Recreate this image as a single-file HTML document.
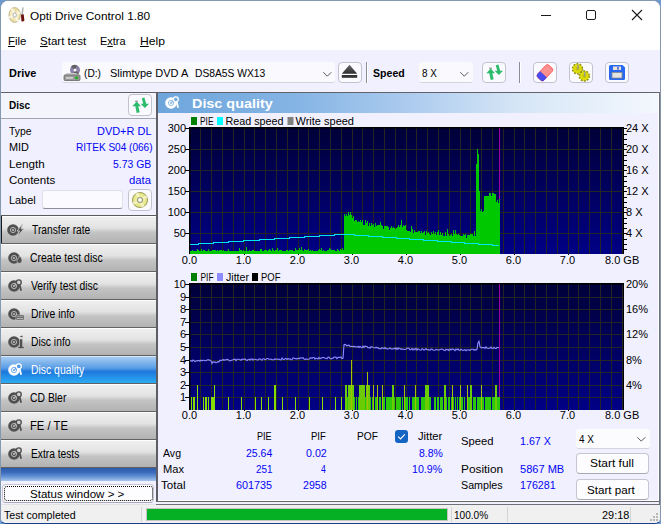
<!DOCTYPE html><html><head><meta charset="utf-8"><title>Opti Drive Control 1.80</title><style>
*{box-sizing:border-box;margin:0;padding:0}
html,body{width:661px;height:524px;overflow:hidden;background:#6a9ad0}
body{font-family:"Liberation Sans",sans-serif;font-size:12px;color:#000;position:relative}
.abs{position:absolute}
.t{position:absolute;white-space:nowrap;transform-origin:0 0}
#win{left:0;top:0;width:661px;height:524px;background:#f0f0ff;border:1px solid #8498b0;border-radius:8px 8px 6px 6px;overflow:hidden;border-bottom-color:#1c3c8c}
#title{left:0;top:0;width:661px;height:50px;background:#fff}
.combo{position:absolute;background:#f9f9fe;border-radius:3px;border-bottom:1px solid #d4d4dc}
.tbtn{position:absolute;border:1px solid #c2c2d0;border-radius:4px;background:#fafaff}
.nav{position:absolute;left:1px;width:155px;height:28px;background:linear-gradient(#efefef 0%,#e2e2e2 42%,#c4c4c4 58%,#b2b2b2 100%);border-top:1px solid #fdfdfd;border-bottom:1px solid #626262}
.nav.sel{background:linear-gradient(#a6ccf2 0%,#5a9ee6 42%,#1e78dc 56%,#2cacf4 100%);border-top-color:#d6e8fa}
.wbtn{position:absolute;border:1px solid #c6c6d2;border-bottom-color:#a8a8b4;border-radius:4px;background:#fdfdff}
</style></head><body><div id="win" class="abs">
<div class="abs" style="left:-1px;top:-1px;width:661px;height:524px">
<div id="title" class="abs"></div>
<svg class="abs" style="left:8px;top:6px" width="18" height="18" viewBox="8 6 18 18"><defs><radialGradient id="cd"><stop offset="0.300" stop-color="#fbf6dc"/><stop offset="0.800" stop-color="#efe4b0"/><stop offset="1" stop-color="#cfc28c"/></radialGradient></defs><ellipse cx="14.700" cy="15" rx="5.800" ry="7.600" fill="url(#cd)" stroke="#b4a87c" stroke-width="0.600"/><path d="M14.700,15L10.500,9.500L12.500,8ZM14.700,15L19,20.500L17,22ZM14.700,15L9,16L9.300,18.500ZM14.700,15L20.300,13.500L20,11.500Z" fill="#fffdf0" opacity="0.850"/><path d="M14.700,15L15.500,7.500L17.500,8.300ZM14.700,15L13.500,22.500L11.800,21.800Z" fill="#dccf98" opacity="0.800"/><ellipse cx="14.700" cy="15" rx="1.900" ry="2.400" fill="#d8d8d8" stroke="#a8a8a8" stroke-width="0.500"/><ellipse cx="14.700" cy="15" rx="0.900" ry="1.200" fill="#fff"/><path d="M22.600,7.500L23.400,7.700L22.600,15.500L21.300,15.500Z" fill="#b8b8b8" stroke="#8c8c8c" stroke-width="0.300"/><path d="M21,14.800L23.700,14.300L24.400,20.800Q23,22 21.400,21.300Z" fill="#6c1010"/></svg>
<div class="t" style="left:30px;top:9px;font-size:11.5px;line-height:14px;transform:scaleX(1.0276)">Opti Drive Control 1.80</div>
<div class="t" style="left:8px;top:34px;font-size:11.5px;line-height:14px;transform:scaleX(0.9854)"><u>F</u>ile</div>
<div class="t" style="left:40px;top:34px;font-size:11.5px;line-height:14px;transform:scaleX(1.0027)"><u>S</u>tart test</div>
<div class="t" style="left:100px;top:34px;font-size:11.5px;line-height:14px;transform:scaleX(0.9529)">E<u>x</u>tra</div>
<div class="t" style="left:140px;top:34px;font-size:11.5px;line-height:14px;transform:scaleX(1.0554)"><u>H</u>elp</div>
<svg class="abs" style="left:530px;top:0" width="131" height="32" viewBox="0 0 131 32"><g stroke="#1a1a1a" stroke-width="1" fill="none"><path d="M11,15.500h10" shape-rendering="crispEdges"/><rect x="56.500" y="10.500" width="9" height="9" rx="1.500"/><path d="M102,10l10,10M112,10l-10,10" stroke-width="1.100"/></g></svg>
<div class="t" style="left:9px;top:66px;font-size:11.5px;line-height:14px;transform:scaleX(0.9490);font-weight:bold">Drive</div>
<div class="combo" style="left:62px;top:62px;width:273px;height:21px"></div>
<svg class="abs" style="left:63px;top:63px" width="18" height="19" viewBox="0 0 18 19"><circle cx="12" cy="7" r="5" fill="#8c80a8"/><path d="M12,7L8,3.500A5,5 0 0 1 14,2.400Z" fill="#606060"/><path d="M12,7L16,10.500A5,5 0 0 1 10,11.600Z" fill="#606060"/><circle cx="12" cy="7" r="1.500" fill="#fff"/><path d="M1,12.500L4,10h9l4,2.500z" fill="#c8c8c8"/><rect x="1" y="12" width="16" height="5.500" rx="1" fill="#9a9a9a" stroke="#666" stroke-width="0.800"/><rect x="3" y="14.300" width="7" height="1.200" fill="#e8e8e8"/><circle cx="13.500" cy="14.700" r="1.500" fill="#18b018"/></svg>
<div class="t" style="left:84px;top:66px;font-size:11.5px;line-height:14px;transform:scaleX(0.8839)">(D:)</div>
<div class="t" style="left:110px;top:66px;font-size:11.5px;line-height:14px;transform:scaleX(0.9580)">Slimtype DVD A</div>
<div class="t" style="left:195px;top:66px;font-size:11.5px;line-height:14px;transform:scaleX(0.8934)">DS8A5S WX13</div>
<svg class="abs" style="left:322px;top:71px" width="11" height="7" viewBox="0 0 11 7"><path d="M1.300,1.200l4,4l4,-4" stroke="#484848" fill="none" stroke-width="0.900"/></svg>
<div class="tbtn" style="left:338px;top:62px;width:24px;height:21px"></div>
<svg class="abs" style="left:341px;top:64px" width="18" height="15" viewBox="0 0 18 15"><defs><linearGradient id="eg" x1="0" y1="0" x2="0" y2="1"><stop offset="0" stop-color="#6a6a6a"/><stop offset="1" stop-color="#2c2c2c"/></linearGradient></defs><path d="M8.500,0.800L16.200,9.700H0.800Z" fill="url(#eg)"/><rect x="0.800" y="11" width="15.400" height="2.800" fill="#333"/></svg>
<div class="abs" style="left:366px;top:62px;width:1px;height:21px;background:#8c8c94"></div><div class="abs" style="left:367px;top:62px;width:1px;height:21px;background:#fff"></div>
<div class="t" style="left:373px;top:66px;font-size:11.5px;line-height:14px;transform:scaleX(0.9193);font-weight:bold">Speed</div>
<div class="combo" style="left:419px;top:62px;width:54px;height:21px"></div>
<div class="t" style="left:422px;top:66px;font-size:11.5px;line-height:14px;transform:scaleX(0.8585)">8 X</div>
<svg class="abs" style="left:459px;top:71px" width="11" height="7" viewBox="0 0 11 7"><path d="M1.300,1.200l4,4l4,-4" stroke="#484848" fill="none" stroke-width="0.900"/></svg>
<div class="tbtn" style="left:482px;top:62px;width:24px;height:21px"></div>
<svg class="abs" style="left:484.5px;top:64px" width="20" height="18" viewBox="0 0 20 18"><path d="M1.300,9.300L5.700,4.500L10,9.300H7.300L8.700,15.200L5.700,16L4.300,9.300Z" fill="#2cbc6c"/><path d="M9.600,6.700H12.200L10.800,1.200L13.400,0.500L15.200,6.700H18L13.900,11Z" fill="#2cbc6c"/><path d="M4,4.200h3" stroke="#555" stroke-width="0.700"/></svg>
<div class="abs" style="left:519px;top:62px;width:1px;height:21px;background:#8c8c94"></div><div class="abs" style="left:520px;top:62px;width:1px;height:21px;background:#fff"></div>
<div class="tbtn" style="left:533px;top:62px;width:24px;height:21px"></div>
<svg class="abs" style="left:535px;top:63px" width="20" height="19" viewBox="0 0 20 19"><g transform="rotate(-47 10 9.500)"><rect x="1.500" y="5.200" width="16.500" height="8.800" rx="2.500" fill="#ff9090" stroke="#ff5c5c" stroke-width="0.900"/><path d="M4,5.200H7.300V14H4A2.500,2.500 0 0 1 1.500,11.500V7.700A2.500,2.500 0 0 1 4,5.200Z" fill="#4a4af4" stroke="#3838d8" stroke-width="0.500"/></g></svg>
<div class="tbtn" style="left:569px;top:62px;width:24px;height:21px"></div>
<svg class="abs" style="left:570px;top:62px" width="24" height="22" viewBox="0 0 24 22"><circle cx="7.5" cy="6.8" r="4.900" fill="#d4d410" stroke="#909010" stroke-width="1.800" stroke-dasharray="1.700 1.380"/><circle cx="7.5" cy="6.8" r="4.300" fill="#dcdc0c"/><circle cx="7.5" cy="6.8" r="2" fill="#c4c408"/><rect x="7.3" y="2.8" width="1.400" height="4.500" fill="#989898"/><circle cx="14.3" cy="14" r="4.900" fill="#d4d410" stroke="#909010" stroke-width="1.800" stroke-dasharray="1.700 1.380"/><circle cx="14.3" cy="14" r="4.300" fill="#dcdc0c"/><circle cx="14.3" cy="14" r="2" fill="#c4c408"/><rect x="14.1" y="10" width="1.400" height="4.500" fill="#989898"/></svg>
<div class="tbtn" style="left:605px;top:62px;width:24px;height:21px"></div>
<svg class="abs" style="left:608px;top:64px" width="18" height="17" viewBox="0 0 18 17"><path d="M1,2.500Q1,1 2.500,1H14.500L17,3.500V14.500Q17,16 15.500,16H2.500Q1,16 1,14.500Z" fill="#2868f0"/><rect x="5" y="2.500" width="8" height="3.500" fill="#ece4d4"/><rect x="9.300" y="2.800" width="1.400" height="2.900" fill="#3050e0"/><rect x="4" y="8.500" width="10" height="5.500" fill="#e4e4e4" stroke="#8a8a8a" stroke-width="0.800"/></svg>
<div class="abs" style="left:0;top:92px;width:158px;height:1px;background:#62626a"></div>
<div class="abs" style="left:156px;top:92px;width:2px;height:410px;background:#5e5e66"></div>
<div class="abs" style="left:1px;top:93px;width:155px;height:26px;background:#f4f4fc;border-bottom:1px solid #a4a4ac"></div>
<div class="t" style="left:9px;top:98px;font-size:11.5px;line-height:14px;transform:scaleX(0.8685);font-weight:bold">Disc</div>
<div class="tbtn" style="left:128px;top:94px;width:24px;height:22px"></div>
<svg class="abs" style="left:130.5px;top:96.5px" width="20" height="18" viewBox="0 0 20 18"><path d="M1.300,9.300L5.700,4.500L10,9.300H7.300L8.700,15.200L5.700,16L4.300,9.300Z" fill="#2cbc6c"/><path d="M9.600,6.700H12.200L10.800,1.200L13.400,0.500L15.200,6.700H18L13.900,11Z" fill="#2cbc6c"/><path d="M4,4.200h3" stroke="#555" stroke-width="0.700"/></svg>
<div class="t" style="left:9px;top:124px;font-size:11.5px;line-height:14px;transform:scaleX(0.9007)">Type</div>
<div class="t" style="left:97px;top:124px;font-size:11.5px;line-height:14px;transform:scaleX(0.9523);color:#0404f4">DVD+R DL</div>
<div class="t" style="left:9px;top:140px;font-size:11.5px;line-height:14px;transform:scaleX(0.9452)">MID</div>
<div class="t" style="left:76px;top:140px;font-size:11.5px;line-height:14px;transform:scaleX(0.8743);color:#0404f4">RITEK S04 (066)</div>
<div class="t" style="left:9px;top:157px;font-size:11.5px;line-height:14px;transform:scaleX(1.0143)">Length</div>
<div class="t" style="left:113px;top:157px;font-size:11.5px;line-height:14px;transform:scaleX(0.9046);color:#0404f4">5.73 GB</div>
<div class="t" style="left:9px;top:173px;font-size:11.5px;line-height:14px;transform:scaleX(1.0028)">Contents</div>
<div class="t" style="left:129px;top:173px;font-size:11.5px;line-height:14px;transform:scaleX(0.9805);color:#0404f4">data</div>
<div class="t" style="left:9px;top:193px;font-size:11.5px;line-height:14px;transform:scaleX(0.9469)">Label</div>
<div class="abs" style="left:42px;top:190px;width:81px;height:19px;background:#fbfbff;border:1px solid #e0e0ea;border-bottom-color:#8e8e98;border-radius:3px"></div>
<div class="tbtn" style="left:128px;top:189px;width:24px;height:22px"></div>
<svg class="abs" style="left:131px;top:191px" width="18" height="18" viewBox="0 0 18 18"><defs><radialGradient id="yd"><stop offset="0.350" stop-color="#f4f4b0"/><stop offset="0.850" stop-color="#e4e484"/><stop offset="1" stop-color="#b8b850"/></radialGradient></defs><circle cx="9" cy="9" r="7.600" fill="url(#yd)" stroke="#8a8a48" stroke-width="0.700"/><path d="M9,9L4,2.500L7.500,1.600ZM9,9L14,15.500L10.500,16.400ZM9,9L1.600,11L2.500,14ZM9,9L16.400,7L15.500,4Z" fill="#fafad8" opacity="0.700"/><circle cx="9" cy="9" r="2.800" fill="#d8d8c0" stroke="#8c8c70" stroke-width="0.800"/><circle cx="9" cy="9" r="1.400" fill="#fff"/></svg>
<div class="abs" style="left:1px;top:215px;width:156px;height:1px;background:#5a5a5a"></div>
<div class="abs" style="left:1px;top:216px;width:1px;height:27px;background:#1a1a1a;z-index:2"></div>
<div class="nav" style="top:216px"></div>
<svg class="abs" style="left:3.7px;top:221px" width="22" height="18" viewBox="0 0 22 18"><circle cx="9" cy="9" r="5.800" fill="#505050"/><circle cx="9" cy="9" r="2.600" fill="none" stroke="#cfcfcf" stroke-width="0.800"/><circle cx="9" cy="9" r="0.900" fill="#cfcfcf"/><path d="M18.600,2.800L13,10h2.500L12.800,16.200L19.800,7.800h-2.700z" fill="#505050" stroke="#cfcfcf" stroke-width="0.800"/></svg>
<div class="t" style="left:32px;top:223px;font-size:12px;line-height:14px;transform:scaleX(0.8543)">Transfer rate</div>
<div class="nav" style="top:244px"></div>
<svg class="abs" style="left:4.6px;top:249px" width="22" height="18" viewBox="0 0 22 18"><circle cx="9" cy="9" r="5.800" fill="#505050"/><circle cx="9" cy="9" r="2.600" fill="none" stroke="#cfcfcf" stroke-width="0.800"/><circle cx="9" cy="9" r="0.900" fill="#cfcfcf"/><path d="M14.500,6.500c2,2.300 3,4.300 2.300,6.200c-.9,2-4.300,2-4.800,0c-.5-2 2.200-3.200 2.500-6.200z" fill="#505050" stroke="#cfcfcf" stroke-width="0.700"/></svg>
<div class="t" style="left:30px;top:251px;font-size:12px;line-height:14px;transform:scaleX(0.8720)">Create test disc</div>
<div class="nav" style="top:272px"></div>
<svg class="abs" style="left:4.6px;top:277px" width="22" height="18" viewBox="0 0 22 18"><circle cx="9" cy="9" r="5.800" fill="#505050"/><path d="M9,9L12,3L15.500,7Z" fill="#cfcfcf" opacity="0.800"/><circle cx="9" cy="9" r="2.600" fill="none" stroke="#cfcfcf" stroke-width="0.800"/><circle cx="9" cy="9" r="0.900" fill="#cfcfcf"/><circle cx="13.800" cy="5.300" r="2.500" fill="#cfcfcf" stroke="#505050" stroke-width="1.300"/><path d="M14.600,7.800l1.500,6" stroke="#505050" stroke-width="1.800"/></svg>
<div class="t" style="left:31px;top:279px;font-size:12px;line-height:14px;transform:scaleX(0.8642)">Verify test disc</div>
<div class="nav" style="top:300px"></div>
<svg class="abs" style="left:4.6px;top:305px" width="22" height="18" viewBox="0 0 22 18"><circle cx="9" cy="9" r="5.800" fill="#505050"/><circle cx="9" cy="9" r="2.600" fill="none" stroke="#cfcfcf" stroke-width="0.800"/><circle cx="9" cy="9" r="0.900" fill="#cfcfcf"/><rect x="11" y="10" width="8" height="5" fill="#505050" stroke="#cfcfcf" stroke-width="0.600"/><path d="M12,11.800h6M12,13.500h6" stroke="#cfcfcf" stroke-width="0.800"/></svg>
<div class="t" style="left:31px;top:307px;font-size:12px;line-height:14px;transform:scaleX(0.8659)">Drive info</div>
<div class="nav" style="top:328px"></div>
<svg class="abs" style="left:4.6px;top:333px" width="22" height="18" viewBox="0 0 22 18"><circle cx="9" cy="9" r="5.800" fill="#505050"/><circle cx="9" cy="9" r="2.600" fill="none" stroke="#cfcfcf" stroke-width="0.800"/><circle cx="9" cy="9" r="0.900" fill="#cfcfcf"/><path d="M14.500,3.500l3,-1v2z" fill="#505050"/><rect x="14.300" y="6" width="3.400" height="9" fill="#505050" stroke="#cfcfcf" stroke-width="0.600"/><rect x="13.300" y="13.800" width="5.400" height="1.400" fill="#505050"/></svg>
<div class="t" style="left:31px;top:335px;font-size:12px;line-height:14px;transform:scaleX(0.8575)">Disc info</div>
<div class="nav sel" style="top:356px"></div>
<svg class="abs" style="left:4.6px;top:361px" width="22" height="18" viewBox="0 0 22 18"><circle cx="9" cy="9" r="5.800" fill="#fff"/><path d="M9,9L12,3L15.500,7Z" fill="#4c94e4" opacity="0.800"/><circle cx="9" cy="9" r="2.600" fill="none" stroke="#4c94e4" stroke-width="0.800"/><circle cx="9" cy="9" r="0.900" fill="#4c94e4"/><circle cx="13.800" cy="5.300" r="2.500" fill="#4c94e4" stroke="#fff" stroke-width="1.300"/><path d="M14.600,7.800l1.500,6" stroke="#fff" stroke-width="1.800"/></svg>
<div class="t" style="left:31px;top:363px;font-size:12px;line-height:14px;transform:scaleX(0.8664);color:#fff">Disc quality</div>
<div class="nav" style="top:384px"></div>
<svg class="abs" style="left:4.6px;top:389px" width="22" height="18" viewBox="0 0 22 18"><circle cx="9" cy="9" r="5.800" fill="#505050"/><path d="M9,9L12,3L15.500,7Z" fill="#cfcfcf" opacity="0.800"/><circle cx="9" cy="9" r="2.600" fill="none" stroke="#cfcfcf" stroke-width="0.800"/><circle cx="9" cy="9" r="0.900" fill="#cfcfcf"/><circle cx="13.800" cy="5.300" r="2.500" fill="#cfcfcf" stroke="#505050" stroke-width="1.300"/><path d="M14.600,7.800l1.500,6" stroke="#505050" stroke-width="1.800"/></svg>
<div class="t" style="left:30px;top:391px;font-size:12px;line-height:14px;transform:scaleX(0.8652)">CD Bler</div>
<div class="nav" style="top:412px"></div>
<svg class="abs" style="left:4.6px;top:417px" width="22" height="18" viewBox="0 0 22 18"><circle cx="9" cy="9" r="5.800" fill="#505050"/><path d="M9,9L12,3L15.500,7Z" fill="#cfcfcf" opacity="0.800"/><circle cx="9" cy="9" r="2.600" fill="none" stroke="#cfcfcf" stroke-width="0.800"/><circle cx="9" cy="9" r="0.900" fill="#cfcfcf"/><circle cx="13.800" cy="5.300" r="2.500" fill="#cfcfcf" stroke="#505050" stroke-width="1.300"/><path d="M14.600,7.800l1.500,6" stroke="#505050" stroke-width="1.800"/></svg>
<div class="t" style="left:30px;top:419px;font-size:12px;line-height:14px;transform:scaleX(0.9367)">FE / TE</div>
<div class="nav" style="top:440px"></div>
<svg class="abs" style="left:4.6px;top:445px" width="22" height="18" viewBox="0 0 22 18"><circle cx="9" cy="9" r="5.800" fill="#505050"/><path d="M9,9L12,3L15.500,7Z" fill="#cfcfcf" opacity="0.800"/><circle cx="9" cy="9" r="2.600" fill="none" stroke="#cfcfcf" stroke-width="0.800"/><circle cx="9" cy="9" r="0.900" fill="#cfcfcf"/><circle cx="13.800" cy="5.300" r="2.500" fill="#cfcfcf" stroke="#505050" stroke-width="1.300"/><path d="M14.600,7.800l1.500,6" stroke="#505050" stroke-width="1.800"/></svg>
<div class="t" style="left:31px;top:447px;font-size:12px;line-height:14px;transform:scaleX(0.8519)">Extra tests</div>
<div class="abs" style="left:1px;top:468px;width:155px;height:13px;background:linear-gradient(#2c5aa8,#3c6cbc 35%,#6a98d8 70%,#a8c6ec)"></div>
<div class="wbtn" style="left:2px;top:484px;width:152px;height:19px"></div>
<div class="abs" style="left:4px;top:486px;width:149px;height:15px;border:1px dotted #000;border-radius:3px"></div>
<div class="t" style="left:30px;top:487px;font-size:11.5px;line-height:14px;transform:scaleX(1.0038)">Status window &gt; &gt;</div>
<div class="abs" style="left:158px;top:92px;width:501px;height:1px;background:#62626a"></div>
<div class="abs" style="left:158px;top:93px;width:501px;height:20px;background:linear-gradient(90deg,#6ea6dc 0%,#84b4e4 27%,#accbee 50%,#d6e6f6 72%,#f4f8fe 100%)"></div>
<div class="abs" style="left:158px;top:500px;width:501px;height:1px;background:#fff"></div>
<div class="abs" style="left:156px;top:501px;width:504px;height:1px;background:#66666c"></div>
<div class="abs" style="left:658px;top:93px;width:1px;height:408px;background:#fff"></div>
<div class="abs" style="left:659px;top:92px;width:1px;height:413px;background:#707078"></div>
<svg class="abs" style="left:162.2px;top:94px" width="22" height="18" viewBox="0 0 22 18"><circle cx="9" cy="9" r="5.800" fill="#fff"/><path d="M9,9L12,3L15.500,7Z" fill="#78acdc" opacity="0.800"/><circle cx="9" cy="9" r="2.600" fill="none" stroke="#78acdc" stroke-width="0.800"/><circle cx="9" cy="9" r="0.900" fill="#78acdc"/><circle cx="13.800" cy="5.300" r="2.500" fill="#78acdc" stroke="#fff" stroke-width="1.300"/><path d="M14.600,7.800l1.500,6" stroke="#fff" stroke-width="1.800"/></svg>
<div class="t" style="left:192px;top:96px;font-size:13.5px;line-height:16px;transform:scaleX(1.0646);font-weight:bold;color:#fff">Disc quality</div>
<svg class="abs" width="661" height="524" viewBox="0 0 661 524" style="left:0;top:0">
<defs><linearGradient id="pg" x1="0" y1="0" x2="0" y2="1"><stop offset="0" stop-color="#000038"/><stop offset="1" stop-color="#000086"/></linearGradient><clipPath id="c1"><rect x="190" y="128" width="433" height="126"/></clipPath><clipPath id="c2"><rect x="190" y="284" width="433" height="126"/></clipPath></defs>
<rect x="189" y="127" width="434" height="127" fill="url(#pg)"/>
<path d="M200.5,128 V254 M211.5,128 V254 M222.5,128 V254 M233.5,128 V254 M244.5,128 V254 M254.5,128 V254 M265.5,128 V254 M276.5,128 V254 M287.5,128 V254 M298.5,128 V254 M308.5,128 V254 M319.5,128 V254 M330.5,128 V254 M341.5,128 V254 M352.5,128 V254 M362.5,128 V254 M373.5,128 V254 M384.5,128 V254 M395.5,128 V254 M406.5,128 V254 M416.5,128 V254 M427.5,128 V254 M438.5,128 V254 M449.5,128 V254 M460.5,128 V254 M470.5,128 V254 M481.5,128 V254 M492.5,128 V254 M503.5,128 V254 M514.5,128 V254 M524.5,128 V254 M535.5,128 V254 M546.5,128 V254 M557.5,128 V254 M568.5,128 V254 M578.5,128 V254 M589.5,128 V254 M600.5,128 V254 M611.5,128 V254 M622.5,128 V254 M190,149.5 H623 M190,170.5 H623 M190,191.5 H623 M190,212.5 H623 M190,233.5 H623" stroke="#242424" stroke-width="1" fill="none" shape-rendering="crispEdges"/>
<path d="M189,127.5H624 M189.5,127V254" stroke="#000" stroke-width="1" fill="none" shape-rendering="crispEdges"/>
<path d="M190,128.5H623 M190.5,128V254" stroke="#000" stroke-opacity="0.55" stroke-width="1" fill="none" shape-rendering="crispEdges"/>
<rect x="189" y="283" width="434" height="127" fill="url(#pg)"/>
<path d="M200.5,284 V410 M211.5,284 V410 M222.5,284 V410 M233.5,284 V410 M244.5,284 V410 M254.5,284 V410 M265.5,284 V410 M276.5,284 V410 M287.5,284 V410 M298.5,284 V410 M308.5,284 V410 M319.5,284 V410 M330.5,284 V410 M341.5,284 V410 M352.5,284 V410 M362.5,284 V410 M373.5,284 V410 M384.5,284 V410 M395.5,284 V410 M406.5,284 V410 M416.5,284 V410 M427.5,284 V410 M438.5,284 V410 M449.5,284 V410 M460.5,284 V410 M470.5,284 V410 M481.5,284 V410 M492.5,284 V410 M503.5,284 V410 M514.5,284 V410 M524.5,284 V410 M535.5,284 V410 M546.5,284 V410 M557.5,284 V410 M568.5,284 V410 M578.5,284 V410 M589.5,284 V410 M600.5,284 V410 M611.5,284 V410 M622.5,284 V410 M190,297.5 H623 M190,309.5 H623 M190,322.5 H623 M190,334.5 H623 M190,347.5 H623 M190,360.5 H623 M190,372.5 H623 M190,385.5 H623 M190,397.5 H623" stroke="#242424" stroke-width="1" fill="none" shape-rendering="crispEdges"/>
<path d="M189,283.5H624 M189.5,283V410" stroke="#000" stroke-width="1" fill="none" shape-rendering="crispEdges"/>
<path d="M190,284.5H623 M190.5,284V410" stroke="#000" stroke-opacity="0.55" stroke-width="1" fill="none" shape-rendering="crispEdges"/>
<path d="M499.5,128 V254 M499.5,284 V410" stroke="#a000a0" stroke-width="1" shape-rendering="crispEdges"/>
<g clip-path="url(#c1)"><path d="M190.0,254.0 L190.0,249.3 L190.5,250.6 L191.0,249.5 L191.5,251.3 L192.0,251.3 L192.5,249.9 L193.0,247.7 L193.5,250.5 L194.0,251.2 L194.5,250.9 L195.0,249.7 L195.5,251.0 L196.0,251.0 L196.5,251.1 L197.0,250.0 L197.5,248.8 L198.0,247.9 L198.5,250.2 L199.0,251.0 L199.5,250.5 L200.0,249.9 L200.5,251.4 L201.0,249.8 L201.5,248.5 L202.0,251.0 L202.5,251.3 L203.0,248.9 L203.5,250.0 L204.0,251.0 L204.5,250.0 L205.0,251.2 L205.5,250.7 L206.0,251.5 L206.5,250.5 L207.0,250.6 L207.5,251.4 L208.0,250.0 L208.5,249.2 L209.0,251.0 L209.5,251.0 L210.0,248.7 L210.5,251.2 L211.0,248.7 L211.5,250.7 L212.0,251.3 L212.5,250.0 L213.0,246.6 L213.5,249.8 L214.0,251.0 L214.5,250.2 L215.0,250.9 L215.5,249.8 L216.0,250.1 L216.5,250.5 L217.0,251.0 L217.5,249.9 L218.0,249.8 L218.5,251.1 L219.0,251.1 L219.5,250.1 L220.0,248.5 L220.5,250.2 L221.0,251.2 L221.5,250.1 L222.0,250.8 L222.5,250.8 L223.0,248.0 L223.5,250.4 L224.0,248.8 L224.5,250.6 L225.0,250.0 L225.5,251.1 L226.0,250.5 L226.5,251.3 L227.0,250.7 L227.5,250.8 L228.0,248.4 L228.5,249.2 L229.0,250.7 L229.5,250.9 L230.0,248.8 L230.5,251.0 L231.0,250.5 L231.5,250.7 L232.0,250.6 L232.5,250.6 L233.0,250.3 L233.5,251.0 L234.0,249.8 L234.5,251.4 L235.0,250.4 L235.5,251.2 L236.0,251.2 L236.5,251.1 L237.0,250.7 L237.5,251.2 L238.0,250.1 L238.5,251.4 L239.0,251.4 L239.5,248.1 L240.0,245.3 L240.5,250.0 L241.0,250.1 L241.5,249.9 L242.0,249.6 L242.5,251.4 L243.0,248.0 L243.5,250.0 L244.0,250.6 L244.5,251.3 L245.0,251.2 L245.5,251.0 L246.0,251.0 L246.5,246.6 L247.0,249.4 L247.5,251.3 L248.0,250.6 L248.5,250.6 L249.0,250.9 L249.5,250.4 L250.0,251.2 L250.5,250.8 L251.0,250.0 L251.5,251.1 L252.0,251.2 L252.5,249.9 L253.0,251.1 L253.5,249.9 L254.0,248.0 L254.5,251.3 L255.0,251.4 L255.5,250.5 L256.0,250.4 L256.5,250.8 L257.0,251.2 L257.5,251.4 L258.0,250.4 L258.5,251.2 L259.0,250.1 L259.5,250.5 L260.0,249.6 L260.5,248.8 L261.0,250.4 L261.5,248.6 L262.0,250.6 L262.5,251.4 L263.0,251.4 L263.5,251.1 L264.0,250.7 L264.5,250.3 L265.0,250.0 L265.5,250.2 L266.0,250.8 L266.5,250.3 L267.0,250.6 L267.5,251.3 L268.0,247.5 L268.5,250.1 L269.0,248.6 L269.5,249.2 L270.0,251.3 L270.5,250.0 L271.0,250.0 L271.5,250.7 L272.0,251.2 L272.5,248.2 L273.0,251.3 L273.5,250.0 L274.0,250.8 L274.5,250.9 L275.0,249.3 L275.5,249.9 L276.0,249.7 L276.5,250.0 L277.0,249.9 L277.5,248.4 L278.0,250.2 L278.5,251.4 L279.0,250.7 L279.5,250.2 L280.0,250.4 L280.5,250.4 L281.0,250.0 L281.5,250.0 L282.0,251.0 L282.5,251.3 L283.0,250.5 L283.5,250.8 L284.0,250.8 L284.5,251.0 L285.0,250.6 L285.5,251.1 L286.0,250.8 L286.5,249.9 L287.0,250.3 L287.5,249.5 L288.0,250.1 L288.5,250.7 L289.0,250.3 L289.5,250.4 L290.0,248.6 L290.5,249.9 L291.0,251.3 L291.5,250.1 L292.0,250.5 L292.5,249.7 L293.0,249.9 L293.5,250.7 L294.0,249.9 L294.5,251.4 L295.0,250.8 L295.5,248.2 L296.0,250.8 L296.5,250.1 L297.0,251.1 L297.5,250.1 L298.0,250.2 L298.5,250.1 L299.0,250.4 L299.5,248.4 L300.0,250.4 L300.5,250.0 L301.0,249.9 L301.5,246.6 L302.0,250.8 L302.5,250.5 L303.0,247.4 L303.5,250.9 L304.0,249.6 L304.5,249.0 L305.0,251.4 L305.5,250.1 L306.0,249.9 L306.5,250.0 L307.0,249.9 L307.5,250.3 L308.0,251.5 L308.5,249.2 L309.0,250.7 L309.5,250.8 L310.0,250.7 L310.5,250.1 L311.0,250.2 L311.5,250.9 L312.0,249.4 L312.5,250.0 L313.0,249.8 L313.5,250.8 L314.0,250.3 L314.5,250.8 L315.0,250.2 L315.5,251.3 L316.0,250.5 L316.5,251.1 L317.0,251.2 L317.5,250.9 L318.0,250.6 L318.5,250.4 L319.0,250.7 L319.5,249.2 L320.0,251.2 L320.5,249.9 L321.0,250.7 L321.5,248.4 L322.0,251.1 L322.5,251.1 L323.0,250.4 L323.5,249.6 L324.0,250.1 L324.5,251.3 L325.0,250.0 L325.5,250.8 L326.0,249.9 L326.5,250.9 L327.0,249.8 L327.5,250.2 L328.0,250.8 L328.5,250.0 L329.0,251.5 L329.5,248.4 L330.0,249.9 L330.5,248.7 L331.0,249.5 L331.5,249.8 L332.0,249.9 L332.5,250.4 L333.0,250.2 L333.5,250.1 L334.0,251.1 L334.5,250.2 L335.0,248.6 L335.5,251.4 L336.0,250.5 L336.5,251.0 L337.0,250.8 L337.5,249.2 L338.0,251.1 L338.5,249.5 L339.0,251.3 L339.5,250.7 L340.0,248.6 L340.5,249.4 L341.0,247.7 L341.5,250.3 L342.0,249.8 L342.5,248.0 L343.0,251.4 L343.5,251.2 L344.0,212.4 L344.5,214.0 L345.0,216.9 L345.5,215.7 L346.0,216.9 L346.5,214.2 L347.0,216.2 L347.5,216.0 L348.0,213.3 L348.5,211.9 L349.0,213.0 L349.5,215.2 L350.0,212.9 L350.5,212.4 L351.0,212.0 L351.5,215.5 L352.0,212.7 L352.5,218.4 L353.0,218.1 L353.5,215.5 L354.0,217.6 L354.5,220.6 L355.0,218.8 L355.5,219.7 L356.0,221.8 L356.5,219.6 L357.0,219.8 L357.5,222.1 L358.0,220.6 L358.5,220.6 L359.0,223.0 L359.5,222.2 L360.0,221.0 L360.5,220.4 L361.0,220.3 L361.5,221.7 L362.0,221.5 L362.5,220.3 L363.0,223.6 L363.5,224.7 L364.0,223.1 L364.5,224.9 L365.0,225.2 L365.5,220.2 L366.0,222.7 L366.5,222.7 L367.0,224.9 L367.5,220.8 L368.0,222.4 L368.5,226.1 L369.0,222.8 L369.5,222.9 L370.0,224.5 L370.5,226.4 L371.0,223.3 L371.5,222.9 L372.0,225.7 L372.5,225.1 L373.0,224.8 L373.5,224.3 L374.0,226.4 L374.5,227.4 L375.0,226.5 L375.5,223.4 L376.0,226.3 L376.5,226.4 L377.0,223.9 L377.5,225.0 L378.0,223.7 L378.5,224.5 L379.0,224.5 L379.5,225.2 L380.0,227.2 L380.5,222.1 L381.0,227.7 L381.5,224.7 L382.0,228.2 L382.5,226.0 L383.0,226.0 L383.5,229.0 L384.0,227.8 L384.5,225.7 L385.0,229.3 L385.5,225.5 L386.0,229.3 L386.5,225.8 L387.0,226.2 L387.5,226.2 L388.0,228.3 L388.5,226.6 L389.0,228.7 L389.5,230.1 L390.0,228.9 L390.5,228.5 L391.0,225.8 L391.5,226.2 L392.0,230.0 L392.5,228.0 L393.0,228.3 L393.5,227.3 L394.0,222.2 L394.5,227.9 L395.0,225.8 L395.5,229.1 L396.0,226.7 L396.5,227.9 L397.0,226.9 L397.5,227.2 L398.0,226.9 L398.5,224.8 L399.0,227.5 L399.5,227.5 L400.0,224.7 L400.5,225.0 L401.0,226.2 L401.5,220.3 L402.0,228.2 L402.5,227.3 L403.0,226.5 L403.5,225.0 L404.0,227.3 L404.5,226.3 L405.0,227.1 L405.5,225.4 L406.0,227.7 L406.5,230.3 L407.0,227.9 L407.5,231.1 L408.0,227.9 L408.5,231.4 L409.0,229.2 L409.5,230.9 L410.0,231.4 L410.5,232.3 L411.0,232.3 L411.5,225.9 L412.0,233.0 L412.5,229.0 L413.0,230.2 L413.5,232.8 L414.0,233.3 L414.5,230.4 L415.0,230.3 L415.5,231.7 L416.0,229.4 L416.5,232.2 L417.0,230.0 L417.5,231.6 L418.0,232.3 L418.5,231.0 L419.0,230.8 L419.5,230.5 L420.0,231.5 L420.5,233.1 L421.0,234.1 L421.5,231.0 L422.0,231.8 L422.5,232.8 L423.0,231.9 L423.5,231.7 L424.0,234.0 L424.5,231.3 L425.0,232.7 L425.5,234.9 L426.0,234.3 L426.5,230.8 L427.0,234.7 L427.5,232.7 L428.0,232.9 L428.5,231.5 L429.0,233.5 L429.5,234.4 L430.0,233.6 L430.5,234.9 L431.0,232.7 L431.5,232.0 L432.0,233.7 L432.5,234.0 L433.0,234.6 L433.5,231.4 L434.0,234.8 L434.5,234.0 L435.0,235.3 L435.5,232.1 L436.0,233.8 L436.5,234.9 L437.0,234.4 L437.5,232.3 L438.0,233.9 L438.5,230.1 L439.0,234.5 L439.5,235.0 L440.0,235.1 L440.5,232.4 L441.0,235.0 L441.5,234.9 L442.0,234.4 L442.5,233.4 L443.0,232.2 L443.5,236.2 L444.0,232.3 L444.5,235.9 L445.0,233.6 L445.5,232.2 L446.0,234.9 L446.5,235.6 L447.0,231.3 L447.5,229.3 L448.0,234.0 L448.5,233.7 L449.0,233.2 L449.5,236.0 L450.0,234.4 L450.5,234.9 L451.0,234.4 L451.5,233.8 L452.0,236.8 L452.5,236.4 L453.0,234.8 L453.5,229.6 L454.0,235.0 L454.5,234.1 L455.0,235.5 L455.5,230.1 L456.0,231.8 L456.5,234.1 L457.0,235.8 L457.5,235.0 L458.0,230.2 L458.5,234.5 L459.0,233.4 L459.5,235.2 L460.0,233.9 L460.5,235.5 L461.0,235.0 L461.5,236.2 L462.0,235.7 L462.5,236.3 L463.0,233.1 L463.5,234.0 L464.0,236.2 L464.5,235.0 L465.0,231.1 L465.5,233.6 L466.0,237.5 L466.5,237.8 L467.0,233.6 L467.5,234.8 L468.0,233.7 L468.5,235.0 L469.0,234.7 L469.5,234.8 L470.0,234.9 L470.5,233.7 L471.0,237.8 L471.5,233.8 L472.0,236.3 L472.5,234.4 L473.0,236.9 L473.5,236.1 L474.0,236.1 L474.5,231.4 L475.0,234.6 L475.5,235.5 L476.0,234.5 L476.5,163.7 L477.0,163.7 L477.5,148.6 L478.0,148.6 L478.5,154.0 L479.0,154.0 L479.5,191.0 L480.0,191.0 L480.5,210.8 L481.0,209.3 L481.5,209.1 L482.0,211.3 L482.5,211.5 L483.0,212.8 L483.5,210.6 L484.0,212.4 L484.5,195.8 L485.0,196.4 L485.5,196.4 L486.0,193.3 L486.5,195.9 L487.0,192.0 L487.5,196.1 L488.0,192.4 L488.5,195.9 L489.0,196.4 L489.5,193.1 L490.0,195.3 L490.5,193.1 L491.0,195.6 L491.5,196.2 L492.0,192.9 L492.5,193.2 L493.0,192.5 L493.5,193.1 L494.0,196.1 L494.5,193.6 L495.0,193.2 L495.5,194.3 L496.0,198.8 L496.5,201.7 L497.0,198.7 L497.5,199.7 L498.0,202.7 L498.5,202.7 L499.0,200.0 L499.5,199.3 L500.0,202.4 L500.0,254.0 Z" fill="#00c800" shape-rendering="crispEdges"/>
<path d="M190.0,244.5H191.0V244.5H192.0V244.5H193.0V244.5H194.0V244.5H195.0V244.5H196.0V244.5H197.0V244.5H198.0V243.5H199.0V243.5H200.0V243.5H201.0V243.5H202.0V243.5H203.0V243.5H204.0V243.5H205.0V243.5H206.0V243.5H207.0V243.5H208.0V243.5H209.0V243.5H210.0V243.5H211.0V243.5H212.0V243.5H213.0V242.5H214.0V242.5H215.0V242.5H216.0V242.5H217.0V242.5H218.0V242.5H219.0V242.5H220.0V242.5H221.0V242.5H222.0V242.5H223.0V242.5H224.0V242.5H225.0V242.5H226.0V242.5H227.0V242.5H228.0V241.5H229.0V241.5H230.0V241.5H231.0V241.5H232.0V241.5H233.0V241.5H234.0V241.5H235.0V241.5H236.0V241.5H237.0V241.5H238.0V241.5H239.0V241.5H240.0V241.5H241.0V241.5H242.0V241.5H243.0V240.5H244.0V240.5H245.0V240.5H246.0V240.5H247.0V240.5H248.0V240.5H249.0V240.5H250.0V240.5H251.0V240.5H252.0V240.5H253.0V240.5H254.0V240.5H255.0V240.5H256.0V240.5H257.0V240.5H258.0V240.5H259.0V239.5H260.0V239.5H261.0V239.5H262.0V239.5H263.0V239.5H264.0V239.5H265.0V239.5H266.0V239.5H267.0V239.5H268.0V239.5H269.0V239.5H270.0V239.5H271.0V239.5H272.0V239.5H273.0V239.5H274.0V238.5H275.0V238.5H276.0V238.5H277.0V238.5H278.0V238.5H279.0V238.5H280.0V238.5H281.0V238.5H282.0V238.5H283.0V238.5H284.0V238.5H285.0V238.5H286.0V238.5H287.0V238.5H288.0V238.5H289.0V237.5H290.0V237.5H291.0V237.5H292.0V237.5H293.0V237.5H294.0V237.5H295.0V237.5H296.0V237.5H297.0V237.5H298.0V237.5H299.0V237.5H300.0V237.5H301.0V237.5H302.0V237.5H303.0V237.5H304.0V236.5H305.0V236.5H306.0V236.5H307.0V236.5H308.0V236.5H309.0V236.5H310.0V236.5H311.0V236.5H312.0V236.5H313.0V236.5H314.0V236.5H315.0V236.5H316.0V236.5H317.0V236.5H318.0V236.5H319.0V235.5H320.0V235.5H321.0V235.5H322.0V235.5H323.0V235.5H324.0V235.5H325.0V235.5H326.0V235.5H327.0V235.5H328.0V235.5H329.0V235.5H330.0V235.5H331.0V235.5H332.0V235.5H333.0V235.5H334.0V234.5H335.0V234.5H336.0V234.5H337.0V234.5H338.0V234.5H339.0V234.5H340.0V234.5H341.0V234.5H342.0V234.5H343.0V234.5H344.0V234.5H345.0V234.5H346.0V234.5H347.0V234.5H348.0V234.5H349.0V234.5H350.0V234.5H351.0V234.5H352.0V234.5H353.0V234.5H354.0V235.5H355.0V235.5H356.0V235.5H357.0V235.5H358.0V235.5H359.0V235.5H360.0V235.5H361.0V235.5H362.0V235.5H363.0V235.5H364.0V235.5H365.0V235.5H366.0V235.5H367.0V235.5H368.0V236.5H369.0V236.5H370.0V236.5H371.0V236.5H372.0V236.5H373.0V236.5H374.0V236.5H375.0V236.5H376.0V236.5H377.0V236.5H378.0V236.5H379.0V236.5H380.0V236.5H381.0V236.5H382.0V237.5H383.0V237.5H384.0V237.5H385.0V237.5H386.0V237.5H387.0V237.5H388.0V237.5H389.0V237.5H390.0V237.5H391.0V237.5H392.0V237.5H393.0V237.5H394.0V237.5H395.0V237.5H396.0V238.5H397.0V238.5H398.0V238.5H399.0V238.5H400.0V238.5H401.0V238.5H402.0V238.5H403.0V238.5H404.0V238.5H405.0V238.5H406.0V238.5H407.0V238.5H408.0V238.5H409.0V239.5H410.0V239.5H411.0V239.5H412.0V239.5H413.0V239.5H414.0V239.5H415.0V239.5H416.0V239.5H417.0V239.5H418.0V239.5H419.0V239.5H420.0V239.5H421.0V239.5H422.0V239.5H423.0V240.5H424.0V240.5H425.0V240.5H426.0V240.5H427.0V240.5H428.0V240.5H429.0V240.5H430.0V240.5H431.0V240.5H432.0V240.5H433.0V240.5H434.0V240.5H435.0V240.5H436.0V240.5H437.0V241.5H438.0V241.5H439.0V241.5H440.0V241.5H441.0V241.5H442.0V241.5H443.0V241.5H444.0V241.5H445.0V241.5H446.0V241.5H447.0V241.5H448.0V241.5H449.0V241.5H450.0V241.5H451.0V242.5H452.0V242.5H453.0V242.5H454.0V242.5H455.0V242.5H456.0V242.5H457.0V242.5H458.0V242.5H459.0V242.5H460.0V242.5H461.0V242.5H462.0V242.5H463.0V242.5H464.0V243.5H465.0V243.5H466.0V243.5H467.0V243.5H468.0V243.5H469.0V243.5H470.0V243.5H471.0V243.5H472.0V243.5H473.0V243.5H474.0V243.5H475.0V243.5H476.0V243.5H477.0V243.5H478.0V244.5H479.0V244.5H480.0V244.5H481.0V244.5H482.0V244.5H483.0V244.5H484.0V244.5H485.0V244.5H486.0V244.5H487.0V244.5H488.0V244.5H489.0V244.5H490.0V244.5H491.0V244.5H492.0V245.5H493.0V245.5H494.0V245.5H495.0V245.5H496.0V245.5H497.0V245.5H498.0V245.5H499.0V245.5" stroke="#00e4f4" stroke-width="1" fill="none" shape-rendering="crispEdges"/></g>
<g clip-path="url(#c2)">
<path d="M190.0,361.2 L191.0,360.4 L192.0,361.5 L193.0,360.1 L194.0,360.8 L195.0,361.6 L196.0,361.0 L197.0,360.6 L198.0,360.8 L199.0,360.3 L200.0,361.3 L201.0,360.1 L202.0,360.9 L203.0,360.3 L204.0,360.3 L205.0,360.7 L206.0,360.7 L207.0,360.0 L208.0,359.7 L209.0,359.9 L210.0,360.3 L211.0,360.8 L212.0,363.4 L213.0,361.7 L214.0,362.2 L215.0,361.9 L216.0,362.9 L217.0,362.3 L218.0,361.6 L219.0,361.8 L220.0,360.1 L221.0,360.6 L222.0,360.3 L223.0,359.5 L224.0,360.4 L225.0,359.8 L226.0,359.9 L227.0,359.4 L228.0,359.5 L229.0,360.5 L230.0,361.0 L231.0,360.5 L232.0,360.1 L233.0,359.8 L234.0,359.4 L235.0,359.2 L236.0,360.8 L237.0,359.3 L238.0,359.3 L239.0,359.2 L240.0,359.7 L241.0,360.2 L242.0,359.1 L243.0,359.2 L244.0,359.4 L245.0,359.0 L246.0,360.0 L247.0,360.5 L248.0,359.6 L249.0,359.1 L250.0,360.2 L251.0,359.1 L252.0,358.8 L253.0,360.1 L254.0,359.3 L255.0,359.2 L256.0,359.6 L257.0,360.0 L258.0,359.9 L259.0,359.0 L260.0,358.9 L261.0,359.5 L262.0,360.2 L263.0,358.8 L264.0,358.8 L265.0,359.8 L266.0,359.2 L267.0,358.5 L268.0,358.5 L269.0,359.2 L270.0,359.3 L271.0,359.0 L272.0,359.8 L273.0,359.7 L274.0,359.7 L275.0,358.7 L276.0,359.4 L277.0,359.0 L278.0,359.2 L279.0,359.0 L280.0,359.7 L281.0,359.9 L282.0,358.0 L283.0,359.2 L284.0,359.7 L285.0,358.7 L286.0,358.4 L287.0,359.5 L288.0,358.7 L289.0,359.1 L290.0,358.8 L291.0,359.7 L292.0,359.7 L293.0,357.8 L294.0,358.0 L295.0,358.7 L296.0,358.6 L297.0,359.1 L298.0,358.1 L299.0,358.8 L300.0,357.8 L301.0,358.1 L302.0,358.0 L303.0,357.7 L304.0,359.0 L305.0,359.4 L306.0,359.1 L307.0,359.1 L308.0,359.2 L309.0,359.3 L310.0,358.3 L311.0,357.7 L312.0,358.4 L313.0,357.5 L314.0,357.5 L315.0,359.1 L316.0,358.1 L317.0,358.5 L318.0,359.0 L319.0,357.4 L320.0,358.7 L321.0,358.1 L322.0,357.9 L323.0,357.3 L324.0,357.8 L325.0,358.3 L326.0,358.2 L327.0,358.7 L328.0,357.2 L329.0,357.1 L330.0,358.5 L331.0,358.8 L332.0,358.4 L333.0,358.2 L334.0,357.2 L335.0,357.1 L336.0,357.2 L337.0,358.7 L338.0,357.3 L339.0,357.4 L340.0,357.5 L341.0,356.9 L342.0,358.6 L343.0,358.4 L344.0,344.6 L345.0,344.4 L346.0,345.0 L347.0,345.8 L348.0,345.4 L349.0,345.2 L350.0,346.5 L351.0,346.2 L352.0,346.4 L353.0,346.8 L354.0,346.2 L355.0,346.9 L356.0,346.8 L357.0,347.1 L358.0,346.2 L359.0,347.5 L360.0,346.3 L361.0,347.3 L362.0,347.7 L363.0,346.1 L364.0,347.5 L365.0,346.2 L366.0,346.4 L367.0,346.5 L368.0,347.9 L369.0,347.4 L370.0,348.2 L371.0,346.6 L372.0,346.9 L373.0,347.3 L374.0,347.7 L375.0,348.0 L376.0,347.1 L377.0,347.8 L378.0,347.6 L379.0,348.6 L380.0,348.5 L381.0,348.9 L382.0,347.7 L383.0,348.0 L384.0,348.8 L385.0,347.5 L386.0,348.7 L387.0,348.5 L388.0,349.0 L389.0,348.8 L390.0,347.8 L391.0,348.8 L392.0,349.1 L393.0,348.5 L394.0,348.9 L395.0,347.8 L396.0,349.4 L397.0,347.8 L398.0,349.5 L399.0,348.0 L400.0,348.5 L401.0,349.4 L402.0,348.9 L403.0,349.3 L404.0,349.4 L405.0,349.5 L406.0,349.2 L407.0,348.1 L408.0,348.1 L409.0,348.2 L410.0,349.8 L411.0,349.5 L412.0,348.4 L413.0,350.0 L414.0,348.7 L415.0,349.6 L416.0,348.3 L417.0,350.1 L418.0,348.7 L419.0,349.6 L420.0,350.0 L421.0,350.2 L422.0,348.7 L423.0,349.3 L424.0,350.0 L425.0,349.5 L426.0,348.6 L427.0,349.9 L428.0,349.3 L429.0,350.1 L430.0,350.1 L431.0,349.0 L432.0,349.1 L433.0,350.1 L434.0,350.3 L435.0,350.3 L436.0,349.3 L437.0,349.6 L438.0,350.0 L439.0,350.1 L440.0,349.4 L441.0,349.2 L442.0,349.0 L443.0,349.5 L444.0,350.2 L445.0,350.5 L446.0,349.2 L447.0,349.9 L448.0,349.3 L449.0,350.5 L450.0,349.1 L451.0,350.0 L452.0,349.1 L453.0,349.1 L454.0,349.8 L455.0,350.7 L456.0,349.0 L457.0,349.8 L458.0,349.1 L459.0,350.2 L460.0,350.4 L461.0,349.2 L462.0,350.1 L463.0,350.5 L464.0,350.1 L465.0,349.7 L466.0,350.8 L467.0,349.8 L468.0,350.0 L469.0,349.8 L470.0,350.6 L471.0,349.5 L472.0,349.3 L473.0,349.2 L474.0,350.2 L475.0,349.5 L476.0,350.1 L477.0,349.4 L478.0,342.8 L479.0,341.3 L480.0,346.8 L481.0,347.6 L482.0,347.6 L483.0,347.6 L484.0,347.6 L485.0,348.5 L486.0,346.7 L487.0,348.2 L488.0,348.2 L489.0,348.4 L490.0,348.1 L491.0,347.0 L492.0,348.5 L493.0,348.4 L494.0,347.3 L495.0,348.2 L496.0,348.5 L497.0,347.4 L498.0,347.5 L499.0,347.6" stroke="#8c8cff" stroke-width="1.1" fill="none"/>
<path d="M191,397.4h1V410h-1zM193,397.4h1V410h-1zM194,397.4h1V410h-1zM197,384.8h1V410h-1zM203,397.4h1V410h-1zM205,397.4h1V410h-1zM206,397.4h1V410h-1zM208,397.4h1V410h-1zM211,397.4h1V410h-1zM212,397.4h1V410h-1zM213,397.4h1V410h-1zM214,384.8h1V410h-1zM228,397.4h1V410h-1zM241,397.4h1V410h-1zM255,397.4h1V410h-1zM261,397.4h1V410h-1zM268,397.4h1V410h-1zM274,384.8h1V410h-1zM275,384.8h1V410h-1zM282,397.4h1V410h-1zM295,397.4h1V410h-1zM309,397.4h1V410h-1zM322,397.4h1V410h-1zM335,397.4h1V410h-1zM341,397.4h1V410h-1z" fill="#84dc00" shape-rendering="crispEdges"/>
<path d="M345,397.4h10V410h-10zM356,397.4h1V410h-1zM358,397.4h13V410h-13zM372,397.4h2V410h-2zM375,397.4h3V410h-3zM379,397.4h2V410h-2zM382,397.4h3V410h-3zM386,397.4h6V410h-6zM393,397.4h2V410h-2zM396,397.4h5V410h-5zM402,397.4h1V410h-1zM405,397.4h3V410h-3zM409,397.4h1V410h-1zM412,397.4h7V410h-7zM421,397.4h10V410h-10zM434,397.4h2V410h-2zM437,397.4h2V410h-2zM440,397.4h3V410h-3zM444,397.4h3V410h-3zM448,397.4h2V410h-2zM451,397.4h3V410h-3zM455,397.4h1V410h-1zM457,397.4h1V410h-1zM459,397.4h1V410h-1zM460,397.4h3V410h-3zM464,397.4h1V410h-1zM467,397.4h5V410h-5zM473,397.4h3V410h-3zM477,397.4h7V410h-7zM485,397.4h6V410h-6zM492,397.4h8V410h-8z" fill="#2cc80c" shape-rendering="crispEdges"/>
<path d="M345,384.8h2V410h-2zM348,384.8h6V410h-6zM359,384.8h6V410h-6zM366,384.8h4V410h-4zM392,384.8h2V410h-2zM425,384.8h4V410h-4zM444,384.8h2V410h-2zM470,384.8h2V410h-2zM495,384.8h2V410h-2z" fill="#6ccc04" shape-rendering="crispEdges"/>
<path d="M373,384.8h1V410h-1zM377,384.8h1V410h-1zM382,384.8h1V410h-1zM404,384.8h1V410h-1zM415,384.8h1V410h-1zM452,384.8h1V410h-1zM460,384.8h1V410h-1zM467,384.8h1V410h-1zM481,384.8h1V410h-1zM351,359.6h1V410h-1zM367,372.2h1V410h-1z" fill="#a4c000" shape-rendering="crispEdges"/>
</g>
<path d="M189,128.5h-4M189,149.5h-4M189,170.5h-4M189,191.5h-4M189,212.5h-4M189,233.5h-4M189,284.5h-4M189,297.5h-4M189,309.5h-4M189,322.5h-4M189,334.5h-4M189,347.5h-4M189,360.5h-4M189,372.5h-4M189,385.5h-4M189,397.5h-4M623,128.5h4M623,134.5h4M623,139.5h4M623,144.5h4M623,149.5h4M623,155.5h4M623,160.5h4M623,165.5h4M623,170.5h4M623,176.5h4M623,181.5h4M623,186.5h4M623,191.5h4M623,197.5h4M623,202.5h4M623,207.5h4M623,212.5h4M623,218.5h4M623,223.5h4M623,228.5h4M623,233.5h4M623,239.5h4M623,244.5h4M623,249.5h4M623.5,127V254M623.5,283V410M244,254.5h1M244,410.5h1M298,254.5h1M298,410.5h1M352,254.5h1M352,410.5h1M406,254.5h1M406,410.5h1M460,254.5h1M460,410.5h1M514,254.5h1M514,410.5h1M568,254.5h1M568,410.5h1" stroke="#000" stroke-width="1" fill="none" shape-rendering="crispEdges"/>
<g font-family='"Liberation Sans", sans-serif' font-size="11" fill="#000">
<text x="186" y="131.5" text-anchor="end">300</text>
<text x="186" y="152.5" text-anchor="end">250</text>
<text x="186" y="173.5" text-anchor="end">200</text>
<text x="186" y="194.5" text-anchor="end">150</text>
<text x="186" y="215.5" text-anchor="end">100</text>
<text x="186" y="236.5" text-anchor="end">50</text>
<text x="186" y="287.5" text-anchor="end">10</text>
<text x="186" y="300.5" text-anchor="end">9</text>
<text x="186" y="312.5" text-anchor="end">8</text>
<text x="186" y="325.5" text-anchor="end">7</text>
<text x="186" y="337.5" text-anchor="end">6</text>
<text x="186" y="350.5" text-anchor="end">5</text>
<text x="186" y="363.5" text-anchor="end">4</text>
<text x="186" y="375.5" text-anchor="end">3</text>
<text x="186" y="388.5" text-anchor="end">2</text>
<text x="186" y="400.5" text-anchor="end">1</text>
<text x="626" y="131.5">24 X</text>
<text x="626" y="152.5">20 X</text>
<text x="626" y="173.5">16 X</text>
<text x="626" y="194.5">12 X</text>
<text x="626" y="215.5">8 X</text>
<text x="626" y="236.5">4 X</text>
<text x="626" y="287.5">20%</text>
<text x="626" y="312.5">16%</text>
<text x="626" y="337.5">12%</text>
<text x="626" y="363.5">8%</text>
<text x="626" y="388.5">4%</text>
<text x="189.5" y="264" text-anchor="middle">0.0</text>
<text x="243.5" y="264" text-anchor="middle">1.0</text>
<text x="297.5" y="264" text-anchor="middle">2.0</text>
<text x="351.5" y="264" text-anchor="middle">3.0</text>
<text x="405.5" y="264" text-anchor="middle">4.0</text>
<text x="459.5" y="264" text-anchor="middle">5.0</text>
<text x="513.5" y="264" text-anchor="middle">6.0</text>
<text x="567.5" y="264" text-anchor="middle">7.0</text>
<text x="605" y="264">8.0 GB</text>
<text x="189.5" y="419" text-anchor="middle">0.0</text>
<text x="243.5" y="419" text-anchor="middle">1.0</text>
<text x="297.5" y="419" text-anchor="middle">2.0</text>
<text x="351.5" y="419" text-anchor="middle">3.0</text>
<text x="405.5" y="419" text-anchor="middle">4.0</text>
<text x="459.5" y="419" text-anchor="middle">5.0</text>
<text x="513.5" y="419" text-anchor="middle">6.0</text>
<text x="567.5" y="419" text-anchor="middle">7.0</text>
<text x="605" y="419">8.0 GB</text>
<rect x="191" y="117" width="6" height="8" fill="#008000"/>
<text x="200" y="124.5" textLength="13.5" lengthAdjust="spacingAndGlyphs">PIE</text>
<rect x="217" y="117" width="6" height="8" fill="#00ffff"/>
<text x="225.5" y="124.5" textLength="58" lengthAdjust="spacingAndGlyphs">Read speed</text>
<rect x="287.5" y="117" width="6" height="8" fill="#808080"/>
<text x="295.5" y="124.5" textLength="58.5" lengthAdjust="spacingAndGlyphs">Write speed</text>
<rect x="191" y="273" width="6" height="8" fill="#008000"/>
<text x="200.5" y="280.5" textLength="13" lengthAdjust="spacingAndGlyphs">PIF</text>
<rect x="217" y="273" width="6" height="8" fill="#8c8cff"/>
<text x="226" y="280.5" textLength="23" lengthAdjust="spacingAndGlyphs">Jitter</text>
<rect x="252" y="273" width="6" height="8" fill="#000000"/>
<text x="261" y="280.5" textLength="19.5" lengthAdjust="spacingAndGlyphs">POF</text>
</g>
</svg>
<div class="t" style="left:257px;top:429px;font-size:11.5px;line-height:14px;transform:scaleX(0.7913)">PIE</div>
<div class="t" style="left:311px;top:429px;font-size:11.5px;line-height:14px;transform:scaleX(0.8298)">PIF</div>
<div class="t" style="left:357px;top:429px;font-size:11.5px;line-height:14px;transform:scaleX(0.8808)">POF</div>
<div class="t" style="left:163px;top:446px;font-size:11.5px;line-height:14px;transform:scaleX(0.9184)">Avg</div>
<div class="t" style="left:163px;top:462px;font-size:11.5px;line-height:14px;transform:scaleX(0.9660)">Max</div>
<div class="t" style="left:161px;top:478px;font-size:11.5px;line-height:14px;transform:scaleX(1.0100)">Total</div>
<div class="t" style="left:246px;top:446px;font-size:11.5px;line-height:14px;transform:scaleX(0.9125);color:#0404f4">25.64</div>
<div class="t" style="left:256px;top:462px;font-size:11.5px;line-height:14px;transform:scaleX(0.8621);color:#0404f4">251</div>
<div class="t" style="left:236px;top:478px;font-size:11.5px;line-height:14px;transform:scaleX(0.9384);color:#0404f4">601735</div>
<div class="t" style="left:306px;top:446px;font-size:11.5px;line-height:14px;transform:scaleX(0.9259);color:#0404f4">0.02</div>
<div class="t" style="left:321px;top:462px;font-size:11.5px;line-height:14px;transform:scaleX(0.7504);color:#0404f4">4</div>
<div class="t" style="left:303px;top:478px;font-size:11.5px;line-height:14px;transform:scaleX(0.9186);color:#0404f4">2958</div>
<div class="t" style="left:419px;top:446px;font-size:11.5px;line-height:14px;transform:scaleX(0.9116);color:#0404f4">8.8%</div>
<div class="t" style="left:412px;top:462px;font-size:11.5px;line-height:14px;transform:scaleX(0.9243);color:#0404f4">10.9%</div>
<div class="abs" style="left:395px;top:430px;width:13px;height:13px;background:#1464c4;border-radius:3px"></div>
<svg class="abs" style="left:395px;top:430px" width="13" height="13"><path d="M3.200,6.700l2.300,2.300l4.300,-4.600" stroke="#fff" stroke-width="1.100" fill="none"/></svg>
<div class="t" style="left:418px;top:429px;font-size:11.5px;line-height:14px;transform:scaleX(0.9768)">Jitter</div>
<div class="t" style="left:461px;top:434px;font-size:11.5px;line-height:14px;transform:scaleX(0.9739)">Speed</div>
<div class="t" style="left:520px;top:434px;font-size:11.5px;line-height:14px;transform:scaleX(0.9256);color:#0404f4">1.67 X</div>
<div class="t" style="left:461px;top:462px;font-size:11.5px;line-height:14px;transform:scaleX(1.0302)">Position</div>
<div class="t" style="left:520px;top:462px;font-size:11.5px;line-height:14px;transform:scaleX(0.9606);color:#0404f4">5867 MB</div>
<div class="t" style="left:461px;top:478px;font-size:11.5px;line-height:14px;transform:scaleX(0.9313)">Samples</div>
<div class="t" style="left:520px;top:478px;font-size:11.5px;line-height:14px;transform:scaleX(0.9297);color:#0404f4">176281</div>
<div class="combo" style="left:576px;top:429px;width:74px;height:20px;background:#fcfcff"></div>
<div class="t" style="left:579px;top:432px;font-size:11.5px;line-height:14px;transform:scaleX(0.8629)">4 X</div>
<svg class="abs" style="left:635.5px;top:436px" width="11" height="7" viewBox="0 0 11 7"><path d="M1.300,1.200l4,4l4,-4" stroke="#484848" fill="none" stroke-width="0.900"/></svg>
<div class="wbtn" style="left:576px;top:453px;width:73px;height:21px"></div>
<div class="t" style="left:590px;top:456px;font-size:11.5px;line-height:14px;transform:scaleX(1.0395)">Start full</div>
<div class="wbtn" style="left:576px;top:479px;width:73px;height:21px"></div>
<div class="t" style="left:587px;top:483px;font-size:11.5px;line-height:14px;transform:scaleX(1.0106)">Start part</div>
<div class="abs" style="left:0;top:504px;width:156px;height:1px;background:#e2e2e6"></div><div class="abs" style="left:156px;top:504px;width:505px;height:1px;background:#70707a"></div>
<div class="abs" style="left:0;top:505px;width:661px;height:19px;background:#f0f0f0"></div>
<div class="t" style="left:4px;top:508px;font-size:11.5px;line-height:14px;transform:scaleX(0.9257)">Test completed</div>
<div class="abs" style="left:146px;top:508px;width:302px;height:13px;background:#06b025;border:1px solid #c4c4c4"></div>
<div class="t" style="left:454px;top:508px;font-size:11.5px;line-height:14px;transform:scaleX(0.8758)">100.0%</div>
<div class="t" style="left:602px;top:508px;font-size:11.5px;line-height:14px;transform:scaleX(0.9485)">29:18</div>
<div class="abs" style="left:141px;top:507px;width:1px;height:15px;background:#d4d4d4"></div>
<div class="abs" style="left:451px;top:507px;width:1px;height:15px;background:#d4d4d4"></div>
<div class="abs" style="left:507px;top:507px;width:1px;height:15px;background:#d4d4d4"></div>
<div class="abs" style="left:630px;top:507px;width:1px;height:15px;background:#d4d4d4"></div>
<svg class="abs" style="left:650px;top:513px" width="9" height="9"><g fill="#b8b8b8"><rect x="6" y="0" width="2" height="2"/><rect x="3" y="3" width="2" height="2"/><rect x="6" y="3" width="2" height="2"/><rect x="0" y="6" width="2" height="2"/><rect x="3" y="6" width="2" height="2"/><rect x="6" y="6" width="2" height="2"/></g></svg>
<div class="abs" style="left:660px;top:8px;width:1px;height:510px;background:linear-gradient(#8ea4bc 0,#8ea4bc 24px,#4a74b8 70px,#2c58a8 100%)"></div>
</div></div></body></html>
